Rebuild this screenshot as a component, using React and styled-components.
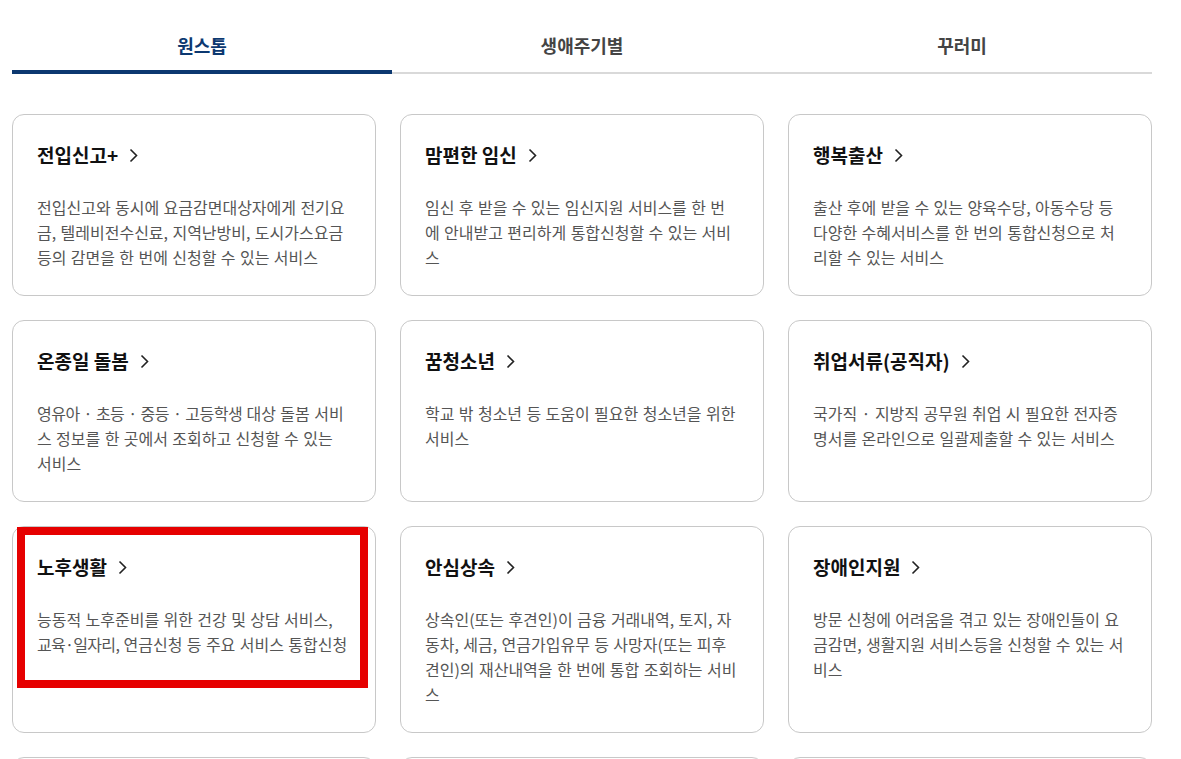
import styled, { createGlobalStyle } from "styled-components";

const GlobalStyle = createGlobalStyle`
  html, body {
    margin: 0;
    padding: 0;
    background: #fff;
    font-family: "Noto Sans CJK KR", "Noto Sans", sans-serif;
  }
  * { box-sizing: border-box; }
`;

const Tight = styled.span`
  white-space: ${(p) => (p.$keep ? "nowrap" : "normal")};
  letter-spacing: ${(p) => p.$ls || "-0.5px"};
`;

const tabs = ["원스톱", "생애주기별", "꾸러미"];

const services = [
  { title: "전입신고+", desc: "전입신고와 동시에 요금감면대상자에게 전기요금, 텔레비전수신료, 지역난방비, 도시가스요금등의 감면을 한 번에 신청할 수 있는 서비스" },
  { title: "맘편한 임신", desc: "임신 후 받을 수 있는 임신지원 서비스를 한 번에 안내받고 편리하게 통합신청할 수 있는 서비스" },
  { title: "행복출산", desc: "출산 후에 받을 수 있는 양육수당, 아동수당 등 다양한 수혜서비스를 한 번의 통합신청으로 처리할 수 있는 서비스" },
  {
    title: "온종일 돌봄",
    desc: <><Tight>영유아 · 초등 · 중등 · 고등학생</Tight> 대상 돌봄 서비스 정보를 한 곳에서 조회하고 신청할 수 있는 서비스</>,
  },
  { title: "꿈청소년", desc: "학교 밖 청소년 등 도움이 필요한 청소년을 위한 서비스" },
  { title: "취업서류(공직자)", desc: "국가직 · 지방직 공무원 취업 시 필요한 전자증명서를 온라인으로 일괄제출할 수 있는 서비스" },
  {
    title: "노후생활",
    desc: <>능동적 노후준비를 위한 건강 및 상담 서비스, <Tight $keep $ls="-0.7px">교육·일자리,</Tight> 연금신청 등 주요 서비스 통합신청</>,
    marked: true,
  },
  { title: "안심상속", desc: "상속인(또는 후견인)이 금융 거래내역, 토지, 자동차, 세금, 연금가입유무 등 사망자(또는 피후견인)의 재산내역을 한 번에 통합 조회하는 서비스" },
  { title: "장애인지원", desc: "방문 신청에 어려움을 겪고 있는 장애인들이 요금감면, 생활지원 서비스등을 신청할 수 있는 서비스" },
  { title: "사망자 재산조회", desc: "사망자의 재산을 한 번에 조회할 수 있는 서비스" },
  { title: "정부24 알림", desc: "생활에 필요한 정보를 알려드리는 서비스" },
  { title: "보조금24", desc: "받을 수 있는 보조금을 한 번에 확인하는 서비스" },
];

const Page = styled.div`
  padding: 0 29px 0 12px;
`;

const TabBar = styled.div`
  display: flex;
  border-bottom: 2px solid #d9d9d9;
`;

const Tab = styled.button`
  flex: 1;
  height: 72px;
  padding: 18px 0 0;
  border: none;
  background: none;
  font-family: inherit;
  font-size: 18px;
  font-weight: 700;
  color: ${(p) => (p.$active ? "#0c3870" : "#444")};
  position: relative;
  cursor: pointer;

  &::after {
    content: "";
    display: ${(p) => (p.$active ? "block" : "none")};
    position: absolute;
    left: 0;
    right: 0;
    bottom: -2px;
    height: 4px;
    background: #0c3870;
  }
`;

const Grid = styled.div`
  display: grid;
  grid-template-columns: repeat(3, 1fr);
  gap: 24px;
  margin-top: 40px;
`;

const Card = styled.a`
  position: relative;
  display: block;
  padding: 26px 24px 25px;
  border: 1px solid #c8c8c8;
  border-radius: 12px;
  background: #fff;
  text-decoration: none;
`;

const Title = styled.h3`
  display: flex;
  align-items: center;
  gap: 11px;
  margin: 0 0 26px;
  font-size: 19px;
  line-height: 28px;
  font-weight: 700;
  color: #111;
`;

const Desc = styled.p`
  margin: 0;
  font-size: 16px;
  line-height: 25px;
  word-spacing: 0.8px;
  color: #555;
  word-break: break-all;
`;

const Mark = styled.span`
  position: absolute;
  left: 4px;
  top: 0;
  width: 351px;
  height: 161px;
  border: 8px solid #e60000;
  pointer-events: none;
`;

const Chevron = () => (
  <svg width="9" height="15" viewBox="0 0 9 15" fill="none">
    <polyline points="1.5,1.5 7.5,7.5 1.5,13.5" stroke="#222" strokeWidth="1.6" />
  </svg>
);

export default function App() {
  return (
    <Page>
      <GlobalStyle />
      <TabBar>
        {tabs.map((t, i) => (
          <Tab key={t} $active={i === 0}>{t}</Tab>
        ))}
      </TabBar>
      <Grid>
        {services.map((s) => (
          <Card key={s.title} href="#">
            <Title>
              {s.title}
              <Chevron />
            </Title>
            <Desc>{s.desc}</Desc>
            {s.marked && <Mark />}
          </Card>
        ))}
      </Grid>
    </Page>
  );
}
